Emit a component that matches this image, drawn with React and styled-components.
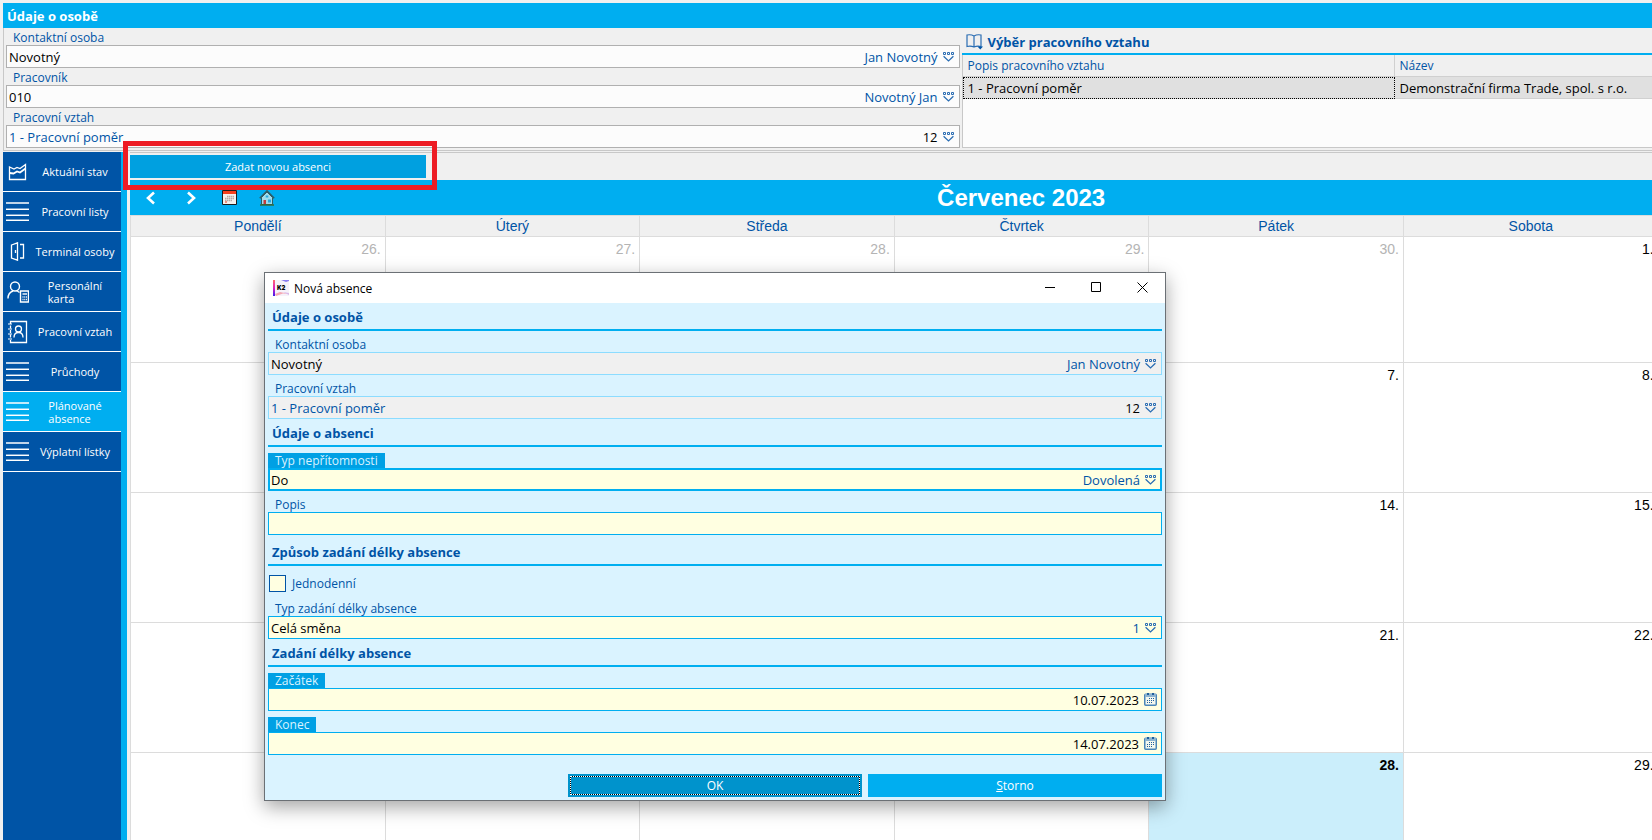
import React, { useState } from "react"
import styled, { createGlobalStyle, css } from "styled-components"

const GlobalStyle = createGlobalStyle`
  * {
    box-sizing: border-box;
  }
  body {
    margin: 0;
    overflow: hidden;
    background: #f0f0f0;
    font-family: "Open Sans", sans-serif;
    font-size: 13px;
    color: #000;
  }
  button, input {
    font: inherit;
    color: inherit;
    border: none;
    margin: 0;
    padding: 0;
    border-radius: 0;
    background: none;
    outline: none;
  }
`

const Page = styled.div`
  display: flex;
  flex-direction: column;
  height: 100vh;
  padding: 3px 0 0 3px;
  overflow: hidden;
`

const TitleBar = styled.h1`
  height: 25px;
  margin: 0;
  padding-left: 4px;
  background: #00aef0;
  color: #fff;
  font-size: 13px;
  line-height: 26px;
`

const PersonPanel = styled.section`
  display: grid;
  grid-template-columns: 58fr 42fr;
  gap: 2px;
  border-left: 1px solid #c8c8c8;
  border-bottom: 1px solid #c8c8c8;
  padding: 0 0 2px 2px;
  margin-bottom: 1px;
`

const FieldRow = styled.div`
  padding-top: ${props => (props.$tight ? "2px" : "6px")};
`

const Label = styled.label`
  display: block;
  width: fit-content;
  padding: 0 7px;
  font-size: 12px;
  line-height: 15px;
  color: ${props => (props.$required ? "#daf3ff" : "#0054a6")};
  background: ${props => (props.$required ? "#00a0e4" : "none")};
`

const looks = {
  plain: css`
    border: 1px solid #b0b0b0;
    background: #fcfcfc;
  `,
  locked: css`
    border: 1px solid #8cdcff;
    background: #f0f0f0;
  `,
  edit: css`
    border: 1px solid #00aef0;
    background: #ffffe1;
  `,
  active: css`
    border: 1px solid #00aef0;
    box-shadow: inset 0 0 0 1px #00aef0;
    background: #ffffe1;
  `,
}

const Box = styled.div`
  display: flex;
  align-items: center;
  height: 23px;
  padding: 0 4px 0 2px;
  ${props => looks[props.$look]}
`

const Value = styled.input`
  flex: 1;
  min-width: 0;
  color: ${props => (props.$blue ? "#0054a6" : "#000")};
  text-align: ${props => (props.$right ? "right" : "left")};
`

const Note = styled.span`
  color: ${props => (props.$dark ? "#000" : "#0054a6")};
`

const IconButton = styled.button`
  display: flex;
  margin-left: 5px;
  color: #0054a6;
`

const RelationPanel = styled.section`
  display: flex;
  flex-direction: column;
`

const RelationTitle = styled.h2`
  display: flex;
  align-items: center;
  gap: 4px;
  height: 27px;
  margin: 0;
  padding: 2px 0 0 4px;
  border-bottom: 2px solid #00aef0;
  color: #0054a6;
  font-size: 13px;
`

const RelationBody = styled.div`
  flex: 1;
  background: #fcfcfc;
  border-left: 1px solid #c8c8c8;
  border-bottom: 1px solid #c8c8c8;
`

const RelationTable = styled.table`
  width: 100%;
  border-spacing: 0;
  table-layout: fixed;
  th, td {
    height: 22px;
    padding: 0 5px;
    border-bottom: 1px solid #d0d0d0;
    text-align: left;
    white-space: nowrap;
  }
  th {
    background: #f0f0f0;
    color: #0054a6;
    font-size: 12px;
    font-weight: normal;
  }
  th:first-child {
    width: 432px;
    border-right: 1px solid #d0d0d0;
  }
  td {
    background: #e0e0e0;
  }
  td:first-child {
    outline: 1px dotted #000;
    outline-offset: -1px;
  }
`

const Main = styled.div`
  flex: 1;
  display: flex;
  min-height: 0;
`

const Sidebar = styled.nav`
  flex: none;
  width: 124px;
  background: #0054a6;
  border-right: 6px solid #00aef0;
`

const NavItem = styled.button`
  display: flex;
  align-items: center;
  width: 100%;
  height: 40px;
  padding-left: 3px;
  border-bottom: 1px solid #fff;
  background: ${props => (props.$selected ? "#00aef0" : "none")};
  color: #fff;
  font-size: 11px;
  line-height: 13px;
  cursor: pointer;
  svg {
    flex: none;
  }
`

const NavText = styled.span`
  flex: 1;
  display: flex;
  justify-content: center;
  text-align: left;
  white-space: pre;
`

const WorkArea = styled.main`
  flex: 1;
  min-width: 0;
  margin-left: 3px;
  border-top: 1px solid #c8c8c8;
`

const ActionBar = styled.div`
  position: relative;
  height: 27px;
  padding-top: 2px;
`

const NewAbsence = styled.button`
  display: block;
  width: 296px;
  height: 23px;
  background: #00a0e0;
  color: #fff;
  font-size: 11px;
`

const Highlight = styled.div`
  position: absolute;
  left: -7px;
  top: -12px;
  width: 314px;
  height: 49px;
  border: 5px solid #ed1c24;
  pointer-events: none;
`

/* seven day columns, the last one runs off the window */
const Calendar = styled.div`
  width: 117.1%;
`

const MonthBar = styled.div`
  display: grid;
  grid-template-columns: 1fr auto 1fr;
  align-items: center;
  height: 35px;
  background: #00aef0;
  color: #fff;
`

const MonthTools = styled.div`
  display: flex;
  align-items: center;
  gap: 22px;
  padding-left: 12px;
  button {
    display: flex;
  }
`

const Month = styled.h2`
  margin: 0;
  font: bold 24px "Liberation Sans", sans-serif;
`

const Days = styled.table`
  width: 100%;
  border-spacing: 0;
  table-layout: fixed;
  font: 14px "Liberation Sans", sans-serif;
  th {
    height: 21px;
    padding: 0;
    border-top: 1px solid #dcdcdc;
    border-left: 1px solid #dcdcdc;
    background: #f0f0f0;
    color: #0054a6;
    font-weight: normal;
  }
`

const Day = styled.td`
  height: ${props => (props.$first ? "126px" : "130px")};
  padding: 4px 4px 0 0;
  border-top: 1px solid #dcdcdc;
  border-left: 1px solid #dcdcdc;
  vertical-align: top;
  text-align: right;
  background: ${props => (props.$today ? "#cbeefb" : "#fff")};
  color: ${props => (props.$faded ? "#b4b4b4" : "#000")};
  font-weight: ${props => (props.$today ? "bold" : "normal")};
`

const Dialog = styled.div`
  position: absolute;
  left: 264px;
  top: 272px;
  width: 902px;
  border: 1px solid #6b7075;
  background: #daf3ff;
  box-shadow: 0 6px 18px rgba(0, 0, 0, 0.36);
`

const DialogBar = styled.div`
  display: flex;
  align-items: center;
  height: 30px;
  padding-left: 8px;
  background: #fff;
  font-size: 12px;
`

const DialogName = styled.span`
  flex: 1;
  padding-left: 5px;
`

const WindowButton = styled.button`
  display: flex;
  align-items: center;
  justify-content: center;
  width: 46px;
  height: 28px;
  margin-bottom: 2px;
`

const DialogBody = styled.form`
  padding: 0 3px 3px;
`

const SectionTitle = styled.h3`
  height: 28px;
  margin: ${props => (props.$spaced ? "3px 0 0" : "0")};
  padding-left: 4px;
  border-bottom: 2px solid #00aef0;
  color: #0054a6;
  font-size: 13px;
  line-height: 29px;
`

const CheckRow = styled.label`
  display: flex;
  align-items: center;
  gap: 6px;
  height: 29px;
  padding: 6px 1px 0;
  color: #0054a6;
  font-size: 12px;
`

const Check = styled.input`
  appearance: none;
  width: 17px;
  height: 17px;
  border: 1px solid #0054a6;
  background: ${props => (props.checked ? "#0054a6" : "#ffffe1")};
`

const Buttons = styled.div`
  display: grid;
  grid-template-columns: repeat(3, 1fr);
  gap: 6px;
  margin-top: 19px;
`

const DialogButton = styled.button`
  height: 23px;
  background: #00aef0;
  color: #fff;
  font-size: 12px;
  ${props =>
    props.$primary &&
    css`
      grid-column: 2;
      background: #0093cc;
      outline: 1px dotted #fff;
      outline-offset: -3px;
      box-shadow: inset 0 0 0 2px #0093cc, inset 0 0 0 3px #000;
    `}
`

const LookupIcon = () => (
  <svg width="12" height="10" viewBox="0 0 12 10" fill="none" stroke="#2a6db3">
    <path d="M.5.5h2v2h-2zM4.5.5h2v2h-2zM8.5.5h2v2h-2z" />
    <path d="M.6 4.3l4.9 4.6 4.9-4.6" strokeWidth="1.3" />
  </svg>
)

const DateIcon = () => (
  <svg width="13" height="13" viewBox="0 0 13 13">
    <rect x=".75" y="1.25" width="11.5" height="11" rx="1" fill="#f4f8ee" stroke="#4a86b8" strokeWidth="1.5" />
    <path d="M1 1h11v3H1z" fill="#8db4d0" />
    <path d="M3 0h2v2H3zM8 0h2v2H8z" fill="#1f5f9c" />
    <path d="M5 5.5h5M3 7.5h7M3 9.5h5" stroke="#1f5f9c" strokeDasharray="1 1" />
  </svg>
)

const BookIcon = () => (
  <svg width="18" height="16" viewBox="0 0 18 16" fill="none" stroke="#2a6db3" strokeWidth="1.2">
    <path d="M8 2Q5 .2 1 1v11.500q4-.8 7 .5 3-1.300 7-.5V1Q11 .2 8 2zM8 2v11" />
    <path d="M11.500 12.500h5.500l-2.700 3z" fill="#0054a6" stroke="none" />
  </svg>
)

const ListIcon = () => (
  <svg width="23" height="19" viewBox="0 0 23 19" fill="#fff">
    <path d="M0 0h23v2H0z" opacity=".75" />
    <path d="M0 6h23v1H0zM0 12h23v1H0zM0 17h23v1H0z" opacity=".45" />
    <path d="M0 7h23v1H0zM0 13h23v1H0zM0 18h23v1H0z" />
  </svg>
)

const ChartIcon = () => (
  <svg width="23" height="19" viewBox="0 0 23 19" fill="none" stroke="#fff" strokeWidth="1.300">
    <path d="M3.500 5v12.500h16V2.500l-5.500 4-3-1-3 1.500z" />
    <path d="M3.500 11l4 .5 3.500-2 3 1 5.500-4" strokeWidth="1.800" />
  </svg>
)

const DoorIcon = () => (
  <svg width="23" height="19" viewBox="0 0 23 19" fill="none" stroke="#fff" strokeWidth="1.300">
    <path d="M5.500 3l6-2.200v17.400l-6-2.200zM14 2.500h3.500v13.500H14" />
    <path d="M9.500 8v3" />
  </svg>
)

const PersonCardIcon = () => (
  <svg width="23" height="22" viewBox="0 0 23 22" fill="none" stroke="#fff" strokeWidth="1.400">
    <circle cx="9" cy="5.500" r="4.500" />
    <path d="M2 17.500c0-4 2-6.500 5-7.500M10.500 9.500l3 2" />
    <path d="M14.500 10h8v11h-8z" />
    <path d="M16.500 13h4.500" />
    <path d="M16.500 16h4.500M16.500 18.500h4.500" strokeDasharray="1 .8" />
  </svg>
)

const ContactIcon = () => (
  <svg width="23" height="24" viewBox="0 0 23 24" fill="none" stroke="#fff" strokeWidth="1.300">
    <path d="M4.500 4V1.500h16v21h-16V20M4.500 5.500v3M4.500 10v3M4.500 14.500v3" />
    <path d="M2 4h4M2 9h4M2 14h4M2 19h4" strokeWidth="1" />
    <circle cx="12.500" cy="9" r="3" />
    <path d="M8 17.500c0-3 1.500-5 4.500-5s4.500 2 4.500 5" />
  </svg>
)

const Chevron = ({ next }) => (
  <svg width="18" height="14" viewBox="0 0 18 14" fill="none" stroke="#fff" strokeWidth="2.600">
    <path d={next ? "M6 1.500l6 5.500-6 5.500" : "M12 1.500L6 7l6 5.500"} />
  </svg>
)

const TodayIcon = () => (
  <svg width="15" height="15" viewBox="0 0 15 15">
    <path d="M.5.5h14v14H.5z" fill="#f5f0ec" stroke="#1c1c1c" />
    <path d="M1 1h13v3H1z" fill="#f4401c" />
    <path d="M5 6.500h7M3 8.500h9M3 10.500h7" stroke="#b8aaa4" strokeWidth="1.500" strokeDasharray="1.500 .5" />
    <path d="M3 11h2v2H3z" fill="#f09080" />
  </svg>
)

const HomeIcon = () => (
  <svg width="16" height="16" viewBox="0 0 16 16">
    <path d="M2.500 7.500v7h11v-7L8 2z" fill="#9fdcec" stroke="#2e5d66" />
    <path d="M.8 8.200L8 1l7.200 7.200" fill="none" stroke="#2e5d66" strokeWidth="1.600" />
    <path d="M4.500 10h2.500v4H4.500z" fill="#c33c3c" />
    <path d="M9 9.500h3v3H9zM6.700 5.500h2.600v2H6.700z" fill="#28a8e0" />
    <path d="M1 15h14" stroke="#356b3c" strokeWidth="1.500" />
  </svg>
)

const AppLogo = () => (
  <svg width="16" height="16" viewBox="0 0 16 16">
    <defs>
      <linearGradient id="bar" x1="0" y1="0" x2="0" y2="1">
        <stop offset="0" stopColor="#ff6a6a" />
        <stop offset=".5" stopColor="#e020c0" />
        <stop offset="1" stopColor="#3a1cf0" />
      </linearGradient>
    </defs>
    <path d="M0 0h16v16H0z" fill="#f6f2fa" />
    <path d="M8 0h8v1l-3 1z" fill="#8a7cf0" />
    <path d="M2 14l5-2 9 2-6-.5L3 16z" fill="#f4a8b4" />
    <path d="M10 12l6 1v2z" fill="#d8b8e8" />
    <path d="M0 0h2v16H0z" fill="url(#bar)" />
    <text x="4" y="10" fontSize="6" fontWeight="900" fontFamily="Inter, sans-serif">
      K2
    </text>
  </svg>
)

const navItems = [
  { text: "Aktuální stav", Icon: ChartIcon },
  { text: "Pracovní listy", Icon: ListIcon },
  { text: "Terminál osoby", Icon: DoorIcon },
  { text: "Personální\nkarta", Icon: PersonCardIcon },
  { text: "Pracovní vztah", Icon: ContactIcon },
  { text: "Průchody", Icon: ListIcon },
  { text: "Plánované\nabsence", Icon: ListIcon },
  { text: "Výplatní lístky", Icon: ListIcon },
]

const weekdays = ["Pondělí", "Úterý", "Středa", "Čtvrtek", "Pátek", "Sobota", ""]

// days behind the dialog stay empty
const weeks = [
  ["26.", "27.", "28.", "29.", "30.", "1.", ""],
  ["", "", "", "", "7.", "8.", ""],
  ["", "", "", "", "14.", "15.", ""],
  ["", "", "", "", "21.", "22.", ""],
  ["", "", "", "", "28.", "29.", ""],
]

function Field({ id, label, value, note, look = "plain", tight, required, blue, dark, date, bare }) {
  return (
    <FieldRow $tight={tight}>
      <Label htmlFor={id} $required={required}>
        {label}
      </Label>
      <Box $look={look}>
        <Value id={id} defaultValue={value} readOnly={look === "locked"} $blue={blue} $right={date} />
        {note && <Note $dark={dark}>{note}</Note>}
        {!bare && <IconButton type="button">{date ? <DateIcon /> : <LookupIcon />}</IconButton>}
      </Box>
    </FieldRow>
  )
}

function AbsenceDialog({ onClose }) {
  const [oneDay, setOneDay] = useState(false)

  return (
    <Dialog role="dialog">
      <DialogBar>
        <AppLogo />
        <DialogName>Nová absence</DialogName>
        <WindowButton>
          <svg width="10" height="10" stroke="#000">
            <path d="M0 5.500h10" />
          </svg>
        </WindowButton>
        <WindowButton>
          <svg width="10" height="10" fill="none" stroke="#000">
            <path d="M.5.5h9v9h-9z" />
          </svg>
        </WindowButton>
        <WindowButton onClick={onClose}>
          <svg width="11" height="11" stroke="#000">
            <path d="M.5.5l10 10M10.500.5l-10 10" />
          </svg>
        </WindowButton>
      </DialogBar>
      <DialogBody onSubmit={e => e.preventDefault()}>
        <SectionTitle>Údaje o osobě</SectionTitle>
        <Field id="d-contact" label="Kontaktní osoba" value="Novotný" note="Jan Novotný" look="locked" />
        <Field id="d-relation" label="Pracovní vztah" value="1 - Pracovní poměr" note="12" look="locked" blue dark />
        <SectionTitle>Údaje o absenci</SectionTitle>
        <Field id="d-type" label="Typ nepřítomnosti" value="Do" note="Dovolená" look="active" required />
        <Field id="d-desc" label="Popis" value="" look="edit" bare />
        <SectionTitle $spaced>Způsob zadání délky absence</SectionTitle>
        <CheckRow>
          <Check type="checkbox" checked={oneDay} onChange={e => setOneDay(e.target.checked)} />
          Jednodenní
        </CheckRow>
        <Field id="d-length" label="Typ zadání délky absence" value="Celá směna" note="1" look="edit" />
        <SectionTitle>Zadání délky absence</SectionTitle>
        <Field id="d-from" label="Začátek" value="10.07.2023" look="edit" required date />
        <Field id="d-to" label="Konec" value="14.07.2023" look="edit" required date />
        <Buttons>
          <DialogButton $primary>OK</DialogButton>
          <DialogButton type="button" onClick={onClose}>
            <u>S</u>torno
          </DialogButton>
        </Buttons>
      </DialogBody>
    </Dialog>
  )
}

export default function App() {
  const [selected, setSelected] = useState(6)
  const [open, setOpen] = useState(true)

  return (
    <Page>
      <GlobalStyle />
      <TitleBar>Údaje o osobě</TitleBar>
      <PersonPanel>
        <div>
          <Field id="contact" label="Kontaktní osoba" value="Novotný" note="Jan Novotný" tight />
          <Field id="worker" label="Pracovník" value="010" note="Novotný Jan" tight />
          <Field id="relation" label="Pracovní vztah" value="1 - Pracovní poměr" note="12" tight blue dark />
        </div>
        <RelationPanel>
          <RelationTitle>
            <BookIcon />
            Výběr pracovního vztahu
          </RelationTitle>
          <RelationBody>
            <RelationTable>
              <thead>
                <tr>
                  <th>Popis pracovního vztahu</th>
                  <th>Název</th>
                </tr>
              </thead>
              <tbody>
                <tr>
                  <td>1 - Pracovní poměr</td>
                  <td>Demonstrační firma Trade, spol. s r.o.</td>
                </tr>
              </tbody>
            </RelationTable>
          </RelationBody>
        </RelationPanel>
      </PersonPanel>
      <Main>
        <Sidebar>
          {navItems.map(({ text, Icon }, i) => (
            <NavItem key={text} $selected={i === selected} onClick={() => setSelected(i)}>
              <Icon />
              <NavText>{text}</NavText>
            </NavItem>
          ))}
        </Sidebar>
        <WorkArea>
          <ActionBar>
            <NewAbsence onClick={() => setOpen(true)}>Zadat novou absenci</NewAbsence>
            <Highlight />
          </ActionBar>
          <Calendar>
            <MonthBar>
              <MonthTools>
                <button><Chevron /></button>
                <button><Chevron next /></button>
                <button><TodayIcon /></button>
                <button><HomeIcon /></button>
              </MonthTools>
              <Month>Červenec 2023</Month>
            </MonthBar>
            <Days>
              <thead>
                <tr>
                  {weekdays.map((day, i) => (
                    <th key={i}>{day}</th>
                  ))}
                </tr>
              </thead>
              <tbody>
                {weeks.map((week, w) => (
                  <tr key={w}>
                    {week.map((day, d) => (
                      <Day key={d} $first={w === 0} $faded={w === 0 && d < 5} $today={w === 4 && d === 4}>
                        {day}
                      </Day>
                    ))}
                  </tr>
                ))}
              </tbody>
            </Days>
          </Calendar>
        </WorkArea>
      </Main>
      {open && <AbsenceDialog onClose={() => setOpen(false)} />}
    </Page>
  )
}
